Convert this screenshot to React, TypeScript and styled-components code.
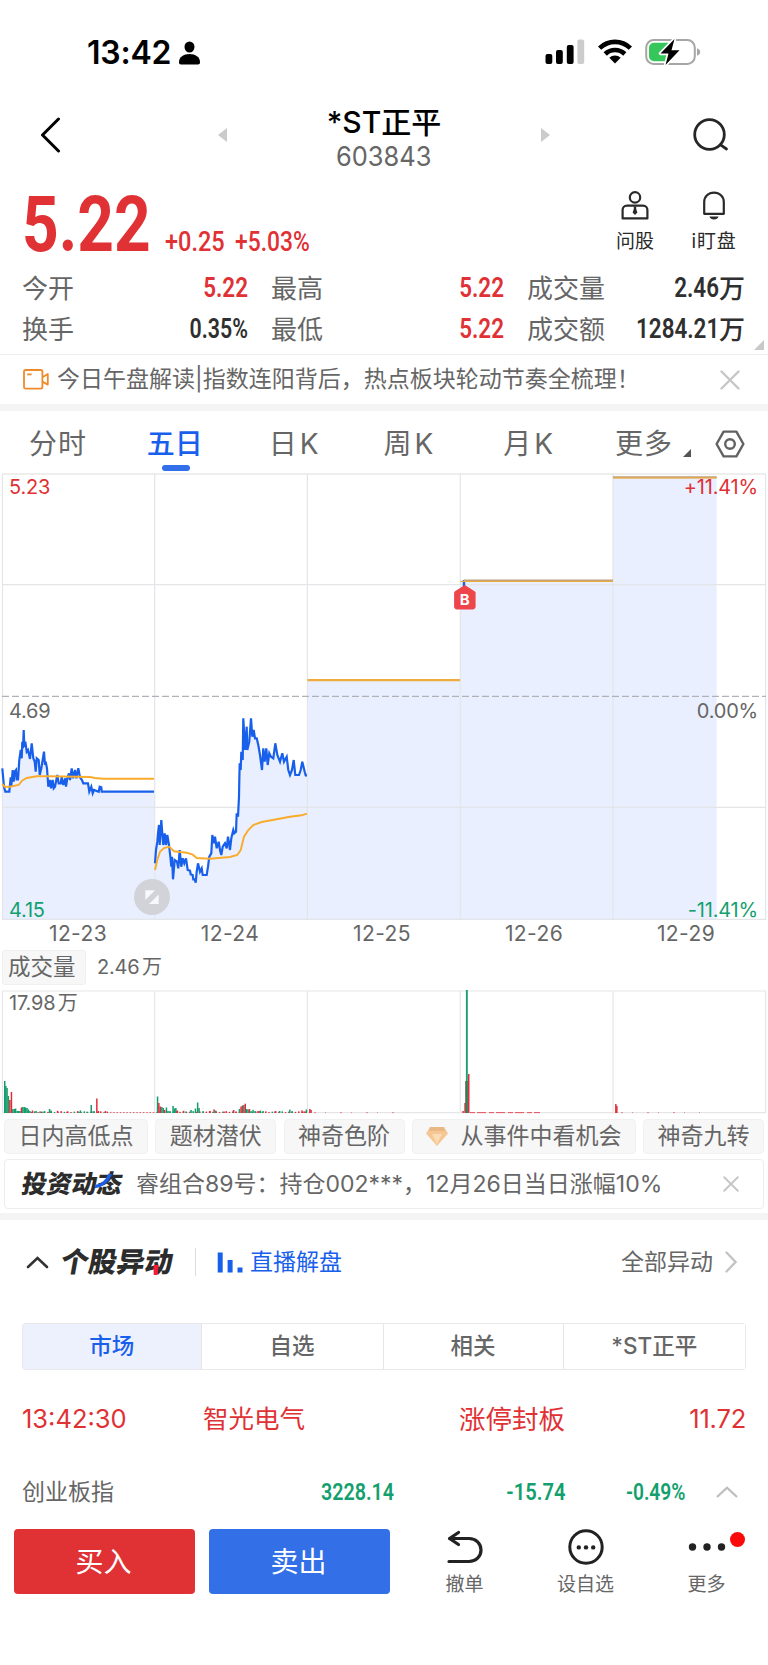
import React from 'react';
import styled, { createGlobalStyle, css } from 'styled-components';

const color = {
  red: '#e03135',
  green: '#14a06e',
  blue: '#1860ec',
  text: '#2f2f2f',
  grey: '#666666',
  line: '#ececec',
  fill: '#e9effe',
  orange: '#f9ab2c',
};

const GlobalStyle = createGlobalStyle`
  * { box-sizing: border-box; }
  body {
    margin: 0;
    background: #fff;
    font-family: Inter, "Noto Sans CJK SC", sans-serif;
    line-height: 1;
    color: ${color.grey};
  }
  svg { display: block; flex: none; }
`;

const Screen = styled.main`
  width: 768px;
  height: 1665px;
  background: #fff;
  overflow: hidden;
`;

type TextProps = {
  $size: number;
  $color?: string;
  $weight?: number;
  $space?: number;
  $word?: number;
  $stretch?: number;
  $from?: 'left' | 'right' | 'center';
};

const textStyle = css<TextProps>`
  display: inline-block;
  flex: none;
  white-space: nowrap;
  font-size: ${p => p.$size}px;
  font-weight: ${p => p.$weight ?? 400};
  color: ${p => p.$color ?? color.grey};
  letter-spacing: ${p => p.$space ?? 0}px;
  word-spacing: ${p => p.$word ?? 0}px;
  transform: scaleX(${p => p.$stretch ?? 1});
  transform-origin: ${p => p.$from ?? 'left'} center;
`;

const Label = styled.span<TextProps>`
  ${textStyle}
`;

const Figure = styled.span<TextProps>`
  ${textStyle}
  font-family: Roboto, "Noto Sans CJK SC", sans-serif;
`;

/* ---------- status bar ---------- */

const StatusBar = styled.header`
  display: flex;
  align-items: center;
  height: 92px;
  padding: 13px 67px 0 87px;
`;

const StatusIcons = styled.div`
  display: flex;
  align-items: center;
  gap: 13px;
  margin-left: auto;
  padding-bottom: 2px;
`;

const PersonIcon = styled.svg`
  margin-left: 7px;
`;

/* ---------- title ---------- */

const TitleBar = styled.div`
  display: flex;
  align-items: center;
  justify-content: space-between;
  height: 88px;
  padding: 0 38px 2px;
`;

const StockSwitch = styled.div`
  display: flex;
  align-items: center;
  justify-content: space-between;
  width: 332px;
  margin-left: 14px;
`;

const StockName = styled.div`
  display: flex;
  flex-direction: column;
  align-items: center;
  gap: 6px;
  padding-top: 6px;
`;

/* ---------- quote ---------- */

const QuoteHead = styled.section`
  display: flex;
  height: 89px;
  padding: 0 14px 0 22px;
`;

const Price = styled.div`
  width: 143px;
  padding-top: 6px;
`;

const Changes = styled.div`
  display: flex;
  align-items: flex-start;
  padding-top: 49px;
`;

const ChangeAmount = styled.div`
  width: 70px;
`;

const QuickActions = styled.div`
  display: flex;
  margin-left: auto;
`;

const QuickAction = styled.div<{ $width: number }>`
  display: flex;
  flex-direction: column;
  align-items: center;
  gap: 12px;
  width: ${p => p.$width}px;
  padding-top: 11px;
`;

const Stats = styled.section`
  position: relative;
  display: grid;
  grid-template-columns: 226px 233px 218px;
  grid-auto-rows: 41px;
  column-gap: 23px;
  height: 85px;
  padding: 0 23px 0 22px;
`;

const Stat = styled.div`
  display: flex;
  align-items: center;
  justify-content: space-between;
  padding-bottom: 2px;
`;

const ExpandCorner = styled.i<{ $size: number; $color: string }>`
  flex: none;
  width: ${p => p.$size}px;
  height: ${p => p.$size}px;
  background: ${p => p.$color};
  clip-path: polygon(100% 0, 100% 100%, 0 100%);
`;

const StatsCorner = styled(ExpandCorner)`
  position: absolute;
  right: 4px;
  bottom: 4px;
`;

const Notice = styled.section`
  display: flex;
  align-items: center;
  height: 50px;
  padding: 0 28px 0 23px;
  border-top: 1px solid ${color.line};
`;

const NoticeText = styled.div`
  flex: 1;
  padding-left: 8px;
`;

const Band = styled.div`
  height: 7px;
  background: #f4f4f4;
`;

/* ---------- period tabs ---------- */

const Periods = styled.nav`
  display: flex;
  align-items: center;
  height: 62px;
  padding: 3px 23px 0 29px;
`;

const Period = styled.div<{ $width: number }>`
  display: flex;
  flex-direction: column;
  align-items: flex-start;
  width: ${p => p.$width}px;
`;

const ActivePeriod = styled(Period)`
  padding-top: 14px;
  &::after {
    content: '';
    width: 28px;
    height: 6px;
    margin: 7px 0 0 15px;
    border-radius: 3px;
    background: #326fe8;
  }
`;

const MoreCorner = styled(ExpandCorner)`
  align-self: flex-end;
  margin: 0 24px 16px 0;
`;

/* ---------- charts ---------- */

const ChartArea = styled.section`
  position: relative;
  height: 448px;
`;

const ChartLabel = styled.span<{ $top: number; $side: 'left' | 'right'; $color: string }>`
  position: absolute;
  top: ${p => p.$top}px;
  ${p => p.$side}: ${p => (p.$side === 'left' ? 9 : 10)}px;
  font-size: 20px;
  letter-spacing: -0.2px;
  word-spacing: -3px;
  color: ${p => p.$color};
`;

const Dates = styled.div`
  display: grid;
  grid-template-columns: repeat(5, 152px);
  align-items: center;
  justify-items: center;
  height: 28px;
  padding: 0 0 4px 2px;
`;

const VolumeHead = styled.div`
  display: flex;
  align-items: center;
  gap: 11px;
  height: 41px;
  padding: 0 0 5px 2px;
`;

const VolumeButton = styled.div`
  display: flex;
  align-items: center;
  width: 84px;
  height: 35px;
  padding-left: 5px;
  border: 1px solid #f0f0f0;
  border-radius: 3px;
  background: #f7f7f7;
`;

const VolumeArea = styled.section`
  position: relative;
  height: 124px;
`;

/* ---------- tags and feed ---------- */

const Tags = styled.div`
  display: flex;
  gap: 7.25px;
  height: 45px;
  padding: 5px 4px;
`;

const Tag = styled.div<{ $width: number }>`
  display: flex;
  align-items: center;
  justify-content: center;
  gap: 12.5px;
  width: ${p => p.$width}px;
  border: 1px solid #f1f1f1;
  border-radius: 4px;
  background: #f7f7f7;
`;

const Feed = styled.div`
  display: flex;
  align-items: center;
  height: 50px;
  margin: 0 4px 4px;
  padding: 0 24px 0 17px;
  border: 1.5px solid #ededed;
  border-radius: 4px;
`;

const FeedText = styled.div`
  flex: 1;
  padding-left: 14px;
`;

const Slogan = styled.div<{ $size: number; $width: number; $indent?: number }>`
  position: relative;
  width: ${p => p.$width}px;
  margin-left: ${p => p.$indent ?? 0}px;
  font-size: ${p => p.$size}px;
  font-weight: 900;
  white-space: nowrap;
  color: #2c2c2c;
  transform: skewX(-10deg);
`;

const Accent = styled.svg<{ $left: number; $top: number }>`
  position: absolute;
  left: ${p => p.$left}px;
  top: ${p => p.$top}px;
`;

/* ---------- movers ---------- */

const MoversHead = styled.div`
  display: flex;
  align-items: center;
  height: 82px;
  padding: 2px 31px 0 26px;
`;

const HeadDivider = styled.i`
  width: 1px;
  height: 28px;
  margin: 0 21px 0 23px;
  background: #dcdcdc;
`;

const LiveBars = styled.svg`
  margin-right: 7px;
`;

const AllMovers = styled.div`
  display: flex;
  align-items: center;
  gap: 12px;
  margin-left: auto;
`;

const Segments = styled.div`
  display: grid;
  grid-template-columns: 177.5px 182px 180px 1fr;
  height: 47px;
  margin: 21px 22px 0;
  border: 1px solid #e9e9e9;
  border-radius: 3px;
`;

const Segment = styled.div<{ $active?: boolean }>`
  display: flex;
  align-items: center;
  justify-content: center;
  background: ${p => (p.$active ? '#ecf1fd' : '#fff')};
  & + & { border-left: 1.5px solid #e6e6e6; }
`;

const MoverRow = styled.div`
  display: grid;
  grid-template-columns: 181px 256px 1fr auto;
  align-items: center;
  height: 98px;
  padding: 0 22px;
`;

const IndexRow = styled.div`
  display: grid;
  grid-template-columns: 200px 172px 171px 120px 53px;
  align-items: center;
  height: 49px;
  padding: 0 0 1px 22px;
  > :not(:first-child) { justify-self: end; }
`;

/* ---------- bottom bar ---------- */

const BottomBar = styled.footer`
  display: flex;
  height: 112px;
  padding: 12px 0 0 14px;
`;

const TradeButton = styled.div<{ $bg: string }>`
  display: flex;
  align-items: center;
  justify-content: center;
  width: 181px;
  height: 65px;
  margin-right: 14px;
  padding-right: 2px;
  border-radius: 4px;
  background: ${p => p.$bg};
`;

const Tool = styled.div`
  position: relative;
  display: flex;
  flex-direction: column;
  align-items: center;
  gap: 10px;
  width: 121px;
`;

const Dot = styled.i`
  position: absolute;
  left: 84px;
  top: 3px;
  width: 15px;
  height: 15px;
  border-radius: 50%;
  background: #fa0a0a;
`;

/* ---------- price series: thirds of a pixel, left edge at 0 ---------- */

type Point = [number, number];

const day1: Point[] = [
  [7, 235], [12, 290], [16, 305], [28, 305], [32, 262], [34, 288], [38, 240], [41, 275], [44, 245], [48, 240], [50, 268], [54, 268],
  [58, 210], [62, 180], [65, 205], [67, 155], [69, 175], [71, 120], [73, 170], [76, 155], [80, 185], [84, 180], [90, 207], [95, 160], [100, 205],
  [104, 215], [107, 245], [110, 205], [116, 210], [119, 255], [124, 235], [132, 185], [135, 225], [137, 215], [141, 235], [145, 290], [150, 270], [153, 295],
  [158, 270], [161, 295], [165, 290], [172, 255], [176, 280], [182, 280], [185, 260], [190, 285], [196, 265], [198, 290], [202, 265],
  [207, 250], [210, 270], [215, 235], [219, 265], [225, 240], [229, 265], [235, 235], [240, 262], [246, 270], [250, 280], [264, 280],
  [268, 305], [274, 290], [278, 310], [282, 300], [296, 305], [299, 290], [304, 292], [305, 305], [462, 305],
];
const day1Avg: Point[] = [
  [7, 282], [14, 290], [30, 290], [56, 285], [66, 272], [80, 264], [110, 259], [150, 259], [270, 261], [285, 264], [310, 266], [462, 266],
];
const day2: Point[] = [
  [465, 520], [468, 480], [472, 455], [474, 430], [477, 405], [479, 465], [484, 390], [487, 430], [490, 465], [494, 430], [498, 465],
  [502, 435], [507, 465], [512, 510], [514, 530], [516, 500], [519, 568], [524, 510], [531, 515], [535, 535], [539, 480], [544, 530], [548, 505], [553, 520],
  [558, 505], [563, 540], [570, 542], [572, 553], [578, 555], [580, 568], [584, 568], [587, 578], [590, 545], [594, 520], [600, 545], [605, 535], [608, 555],
  [620, 555], [624, 530], [628, 500], [634, 490], [637, 435], [642, 460], [645, 440], [650, 475], [656, 455], [660, 480], [664, 495],
  [668, 470], [675, 460], [680, 475], [684, 440], [690, 480], [694, 445], [700, 420], [703, 430], [708, 425], [710, 370], [714, 380],
  [717, 320], [718, 270], [719, 220], [722, 240], [724, 185], [728, 210], [730, 85], [735, 180], [740, 110], [742, 180], [748, 155],
  [753, 85], [757, 140], [761, 120], [765, 145], [770, 145], [775, 165], [780, 195], [786, 240], [790, 175], [794, 215], [799, 175], [803, 225],
  [808, 190], [813, 200], [820, 205], [826, 160], [832, 195], [840, 215], [847, 190], [852, 215], [860, 200], [865, 240], [870, 255],
  [876, 240], [881, 210], [886, 255], [897, 255], [902, 240], [907, 215], [914, 245], [917, 256], [921, 256],
];
const day2Avg: Point[] = [
  [465, 540], [472, 510], [480, 485], [492, 474], [508, 470], [522, 484], [560, 488], [578, 494], [590, 504], [630, 506], [690, 501],
  [712, 495], [722, 480], [732, 440], [745, 420], [760, 405], [785, 396], [830, 388], [870, 380], [905, 376], [921, 371],
];

const toPath = (points: Point[]) =>
  points.map(([x, y], i) => `${i ? 'L' : 'M'}${(x / 3).toFixed(1)} ${(y / 3 + 217).toFixed(1)}`).join('');

const toArea = (points: Point[]) =>
  `${toPath(points)}L${points[points.length - 1][0] / 3} 446L${points[0][0] / 3} 446Z`;

const columns = [154.7, 307.4, 460.3, 613];

const PriceChart = () => (
  <svg width="768" height="448" viewBox="0 0 768 448">
    <g fill={color.fill}>
      <path d={toArea(day1)} />
      <path d={toArea(day2)} />
      <path d="M307.4 207H460.3V446H307.4ZM460.3 108H613V446H460.3ZM613 5H716.7V446H613Z" />
    </g>
    <g stroke="#e4e5e8" strokeWidth="1.2" fill="none">
      <path d="M2 1H766" strokeWidth="2" stroke="#eeeeee" />
      <path d="M2.5 1V446.3M765.6 1V446.3M2 111.7H766M2 334.3H766M2 446.3H766" />
      {columns.map(x => (
        <path key={x} d={`M${x} 1V446.3`} />
      ))}
    </g>
    <path d="M2 223.3H766" stroke="#b0b2b8" strokeWidth="1.2" strokeDasharray="7 3" />
    <g fill="none" strokeWidth="1.9" strokeLinejoin="miter">
      <path d={toPath(day1)} stroke={color.blue} strokeWidth="2.2" />
      <path d={toPath(day2)} stroke={color.blue} strokeWidth="2.2" />
      <path d={toPath(day1Avg)} stroke={color.orange} />
      <path d={toPath(day2Avg)} stroke={color.orange} />
      <path d="M464 107V114" stroke={color.blue} strokeWidth="2.4" />
      <path d="M307.4 207.2H460" stroke="#efab3e" strokeWidth="2.2" />
      <path d="M464 107.4H613M613 4.2H716.7" stroke="#b8a184" strokeWidth="2" />
      <path d="M460.3 108.4H613M613 4.9H716.7" stroke="#efab3e" strokeWidth="1.3" />
    </g>
    <path
      d="M464.8 112L474.6 118.3C475.3 118.8 475.6 119.4 475.6 120.2V133.5C475.6 135.2 474.4 136.4 472.7 136.4H457C455.3 136.4 454.1 135.2 454.1 133.5V120.2C454.1 119.4 454.4 118.8 455 118.3Z"
      fill="#ee454b"
    />
    <text x="464.8" y="132.3" textAnchor="middle" fontSize="15" fontWeight="700" fill="#fff">
      B
    </text>
    <circle cx="152" cy="424" r="18" fill="#d1d3d8" />
    <path d="M145.3 417.3H155L145.3 427ZM158.7 421.4V431H149Z" fill="#f6f8fd" />
  </svg>
);

/* volume bars: x, height, r(ed) or g(reen) */
type Bar = [number, number, 'r' | 'g'];

const bars: Bar[] = [
  [4.7, 32, 'g'], [5.8, 27, 'g'], [7, 25, 'g'], [8.3, 17, 'g'], [9.8, 13, 'r'], [11.4, 21, 'r'], [12.8, 4, 'g'], [14.3, 4, 'g'],
  [15.6, 4.5, 'g'], [17.2, 2, 'g'], [18.6, 2, 'g'], [20, 2, 'g'], [21.4, 5.5, 'r'], [22.8, 6, 'g'], [24.2, 6, 'g'], [25.6, 5.5, 'g'],
  [27, 5, 'g'], [28.4, 3.5, 'g'], [29.8, 2, 'g'], [32.5, 2.5, 'r'], [36, 2, 'g'], [40, 1.6, 'g'], [43, 1.4, 'g'], [49.5, 4, 'g'],
  [51, 2.4, 'g'], [57.5, 2.2, 'r'], [67, 1.3, 'r'], [79, 1.2, 'g'], [80.4, 2.6, 'g'], [87, 1.4, 'g'], [91.2, 8, 'g'], [93, 1.6, 'g'],
  [96.8, 14.5, 'r'], [98.4, 2, 'r'], [105.4, 2, 'r'],
  [157.5, 16.5, 'g'], [158.8, 10, 'r'], [160.2, 6.5, 'r'], [161.8, 6, 'g'], [163.2, 5, 'g'], [164.6, 3, 'r'], [166.4, 5.5, 'g'],
  [168, 2, 'g'], [170, 2, 'g'], [173, 7, 'g'], [174.4, 4.5, 'g'], [175.8, 5, 'g'], [177.4, 2.5, 'r'], [183.6, 2.2, 'r'], [186, 1.6, 'g'],
  [191, 3, 'g'], [195.4, 4.5, 'g'], [197.6, 10.5, 'g'], [199, 5, 'g'], [203, 2, 'g'], [210, 2, 'r'], [214, 3.6, 'r'], [215.6, 2.4, 'g'],
  [224, 1.4, 'r'], [233.6, 3, 'r'], [236, 1.6, 'r'], [239.4, 4, 'g'], [241, 6.5, 'r'], [242.4, 7.5, 'r'], [243.8, 8, 'g'], [245.2, 9.3, 'r'],
  [246.6, 4, 'g'], [248, 3.5, 'g'], [249.4, 4, 'r'], [251, 2, 'g'], [253, 3.2, 'g'], [255, 2, 'g'], [258, 2, 'r'], [260.4, 2.5, 'g'],
  [263, 2, 'g'], [275, 1.6, 'r'], [279.6, 2, 'g'], [289.8, 3.4, 'g'], [292, 1.2, 'g'], [302, 2.6, 'r'], [304, 1.6, 'r'], [306.4, 3.5, 'g'],
  [309.8, 4, 'r'], [311, 3, 'r'],
  [463, 2, 'r'], [465, 10, 'r'], [468.7, 39, 'r'],
  [615.8, 9, 'r'], [616.8, 7, 'r'],
];

const ripples: Bar[] = Array.from({ length: 92 }, (_, i): Bar => {
  const x = 5 + i * 3.3;
  const busy = x < 110 || x > 157;
  return [x, busy ? 0.9 + ((i * 7) % 5) * 0.25 : 0.7, (i * 5) % 3 === 0 && busy ? 'g' : 'r'];
});

const VolumeChart = () => (
  <svg width="768" height="124" viewBox="0 0 768 124">
    <g stroke="#e6e6e8" strokeWidth="1.2" fill="none">
      <path d="M2 1H766M2.5 1V123M765.6 1V123M2 122.6H766" />
      {columns.map(x => (
        <path key={x} d={`M${x} 1V123`} />
      ))}
    </g>
    {[...ripples, ...bars].map(([x, h, tone], i) => (
      <rect key={i} x={x - 0.7} y={123 - h} width="1.5" height={h} fill={tone === 'r' ? '#e02d3c' : '#149c6c'} />
    ))}
    <path d="M470 122.6H540" stroke="#e02d3c" strokeWidth="0.8" strokeDasharray="5 2 9 3" />
    <path d="M621 122.6H700M314 122.6H400" stroke="#e02d3c" strokeWidth="0.5" strokeDasharray="2 9 1 14" />
    <rect x="465.2" y="91" width="1.4" height="32" fill="#80604f" />
    <rect x="465.9" y="0" width="1.9" height="123" fill="#1c9f72" />
    <rect x="465.9" y="91" width="1.9" height="32" fill="#3c7a54" />
  </svg>
);

/* ---------- small drawings ---------- */

const Cross = ({ size, stroke }: { size: number; stroke: string }) => (
  <svg width={size} height={size} viewBox="0 0 20 20" fill="none" stroke={stroke} strokeWidth="2.4" strokeLinecap="round">
    <path d="M1.5 1.5L18.5 18.5M18.5 1.5L1.5 18.5" />
  </svg>
);

const SignalIcon = () => (
  <svg width="40" height="26" viewBox="0 0 40 26">
    <rect x="0.5" y="15" width="6.8" height="10" rx="2" />
    <rect x="11" y="11" width="6.8" height="14" rx="2" />
    <rect x="21.8" y="6" width="6.8" height="19" rx="2" />
    <rect x="32.4" y="0.5" width="6.8" height="24.5" rx="2" fill="#cccccc" />
  </svg>
);

const WifiIcon = () => (
  <svg width="34" height="25" viewBox="0 0 34 25">
    <g fill="none" stroke="#000" strokeWidth="4.6">
      <path d="M1.6 9.2A22 22 0 0 1 32.4 9.2" />
      <path d="M7.2 15A14 14 0 0 1 26.8 15" />
    </g>
    <path d="M11.3 18.7A8.4 8.4 0 0 1 22.7 18.7L17 24.6Z" />
  </svg>
);

const BatteryIcon = () => (
  <svg width="56" height="28" viewBox="0 0 56 28">
    <rect x="1.2" y="2" width="48.6" height="24" rx="7.5" fill="none" stroke="#a6a6a6" strokeWidth="2" />
    <path d="M52 10.3C54 11 55.2 12.4 55.2 14S54 17 52 17.7Z" fill="#a6a6a6" />
    <path d="M9 4.8H24V23.2H9A5 5 0 0 1 4 18.2V9.8A5 5 0 0 1 9 4.8Z" fill="#35c759" />
    <path d="M29.5 1L15.5 15.5H23.5L20.5 27L34.5 12.2H26.5Z" fill="#000" stroke="#fff" strokeWidth="3.4" strokeLinejoin="round" paintOrder="stroke" />
  </svg>
);

const Arrow = ({ d }: { d: string }) => (
  <svg width="9" height="14" viewBox="0 0 9 14" fill="#cbcbcb">
    <path d={d} />
  </svg>
);

const stats = [
  { name: '今开', value: '5.22', tone: color.red },
  { name: '最高', value: '5.22', tone: color.red },
  { name: '成交量', value: '2.46', unit: '万', tone: color.text },
  { name: '换手', value: '0.35%', tone: color.text },
  { name: '最低', value: '5.22', tone: color.red },
  { name: '成交额', value: '1284.21', unit: '万', tone: color.text },
];

const StatValue = styled.div`
  display: flex;
  align-items: center;
`;

const App = () => (
  <>
    <GlobalStyle />
    <Screen>
      <StatusBar>
        <Label $size={32} $weight={600} $color="#000" $space={-0.2}>13:42</Label>
        <PersonIcon width="23" height="24" viewBox="0 0 23 24">
          <ellipse cx="11.5" cy="6" rx="5" ry="5.6" />
          <path d="M1 21.2C1 16 5.6 13 11.5 13S22 16 22 21.2C22 22.8 21.2 23.4 20 23.4H3C1.8 23.4 1 22.8 1 21.2Z" />
        </PersonIcon>
        <StatusIcons>
          <SignalIcon />
          <WifiIcon />
          <BatteryIcon />
        </StatusIcons>
      </StatusBar>

      <TitleBar>
        <svg width="24" height="36" viewBox="0 0 24 36" fill="none" stroke="#000" strokeWidth="3" strokeLinecap="round" strokeLinejoin="round">
          <path d="M20.5 2L4.5 18L20.5 34" />
        </svg>
        <StockSwitch>
          <Arrow d="M9 0V14L0 7Z" />
          <StockName>
            <Label $size={30} $weight={500} $color="#000">*ST正平</Label>
            <Label $size={26.5} $stretch={0.96} $from="center">603843</Label>
          </StockName>
          <Arrow d="M0 0V14L9 7Z" />
        </StockSwitch>
        <svg width="38" height="36" viewBox="0 0 38 36" fill="none" stroke="#262626" strokeWidth="2.8" strokeLinecap="round">
          <circle cx="17.5" cy="17.5" r="14.8" />
          <path d="M29 28.2L34.5 32" />
        </svg>
      </TitleBar>

      <QuoteHead>
        <Price>
          <Figure $size={78} $weight={700} $color={color.red} $stretch={0.82}>5.22</Figure>
        </Price>
        <Changes>
          <ChangeAmount>
            <Figure $size={27} $weight={500} $color={color.red} $stretch={0.87}>+0.25</Figure>
          </ChangeAmount>
          <Figure $size={27} $weight={500} $color={color.red} $stretch={0.845}>+5.03%</Figure>
        </Changes>
        <QuickActions>
          <QuickAction $width={78}>
            <svg width="28" height="29" viewBox="0 0 28 29" fill="none" stroke="#2a2a2a" strokeWidth="2.2" strokeLinejoin="round">
              <circle cx="14" cy="6.4" r="5.2" />
              <path d="M6 14.6H22C24.8 14.6 26.4 16.6 26.4 19V27.4H1.6V19C1.6 16.6 3.2 14.6 6 14.6Z" />
              <path d="M12.8 15.5H15.2V18L16.4 21.4L14 24L11.6 21.4L12.8 18Z" fill="#2a2a2a" stroke="none" />
            </svg>
            <Label $size={19} $color="#2a2a2a">问股</Label>
          </QuickAction>
          <QuickAction $width={80}>
            <svg width="24" height="29" viewBox="0 0 24 29" fill="none" stroke="#2a2a2a" strokeWidth="2.2" strokeLinejoin="round">
              <path d="M2.2 22.8V11C2.2 5.6 6.4 1.6 12 1.6S21.8 5.6 21.8 11V22.8Z" />
              <path d="M7.4 25.6H16.6C16 27.6 14.2 28.6 12 28.6S8 27.6 7.4 25.6Z" fill="#2a2a2a" stroke="none" />
            </svg>
            <Label $size={19} $color="#2a2a2a" $space={0.8}>i盯盘</Label>
          </QuickAction>
        </QuickActions>
      </QuoteHead>

      <Stats>
        {stats.map(s => (
          <Stat key={s.name}>
            <Label $size={26}>{s.name}</Label>
            <StatValue>
              <Figure $size={27} $weight={600} $color={s.tone} $stretch={s.value.endsWith('%') ? 0.79 : 0.83} $from="right">{s.value}</Figure>
              {s.unit && <Label $size={26} $weight={500} $color={s.tone}>{s.unit}</Label>}
            </StatValue>
          </Stat>
        ))}
        <StatsCorner $size={10} $color="#c9c9c9" />
      </Stats>

      <Notice>
        <svg width="26" height="21" viewBox="0 0 26 21" fill="none" stroke="#ef8b2d" strokeWidth="1.8" strokeLinejoin="round">
          <rect x="1" y="1" width="18.4" height="18.6" rx="1.6" />
          <path d="M4.2 5.4H8.6" />
          <path d="M19.4 8.2L24.8 5V15.6L19.4 12.6" />
        </svg>
        <NoticeText>
          <Label $size={23}>今日午盘解读|指数连阳背后，热点板块轮动节奏全梳理！</Label>
        </NoticeText>
        <Cross size={20} stroke="#c6c6c6" />
      </Notice>
      <Band />

      <Periods>
        <Period $width={118}><Label $size={28} $space={1}>分时</Label></Period>
        <ActivePeriod $width={122}><Label $size={28} $weight={500} $color={color.blue}>五日</Label></ActivePeriod>
        <Period $width={115}><Label $size={28} $space={3}>日K</Label></Period>
        <Period $width={120}><Label $size={28} $space={3}>周K</Label></Period>
        <Period $width={112}><Label $size={28} $space={3}>月K</Label></Period>
        <Period $width={68}><Label $size={28} $space={1}>更多</Label></Period>
        <MoreCorner $size={8} $color="#555" />
        <svg width="30" height="28" viewBox="0 0 30 28" fill="none" stroke="#626262" strokeWidth="2.4" strokeLinejoin="round">
          <path d="M8.6 1.6H21.4L28.4 14L21.4 26.4H8.6L1.6 14Z" />
          <circle cx="15" cy="14" r="4.8" />
        </svg>
      </Periods>

      <ChartArea>
        <PriceChart />
        <ChartLabel $top={4} $side="left" $color={color.red}>5.23</ChartLabel>
        <ChartLabel $top={4} $side="right" $color={color.red}>+11.41%</ChartLabel>
        <ChartLabel $top={228} $side="left" $color={color.grey}>4.69</ChartLabel>
        <ChartLabel $top={228} $side="right" $color={color.grey}>0.00%</ChartLabel>
        <ChartLabel $top={427} $side="left" $color={color.green}>4.15</ChartLabel>
        <ChartLabel $top={427} $side="right" $color={color.green}>-11.41%</ChartLabel>
      </ChartArea>

      <Dates>
        {['12-23', '12-24', '12-25', '12-26', '12-29'].map(d => (
          <Label key={d} $size={21} $space={0.4}>{d}</Label>
        ))}
      </Dates>

      <VolumeHead>
        <VolumeButton><Label $size={22.5}>成交量</Label></VolumeButton>
        <Label $size={20} $word={-3} $space={-0.2}>2.46 万</Label>
      </VolumeHead>
      <VolumeArea>
        <VolumeChart />
        <ChartLabel $top={3} $side="left" $color={color.grey}>17.98 万</ChartLabel>
      </VolumeArea>

      <Tags>
        <Tag $width={144}><Label $size={23}>日内高低点</Label></Tag>
        <Tag $width={121}><Label $size={23}>题材潜伏</Label></Tag>
        <Tag $width={121}><Label $size={23}>神奇色阶</Label></Tag>
        <Tag $width={224}>
          <svg width="22" height="19" viewBox="0 0 22 19">
            <path d="M4 0H18L22 6.5L11 19L0 6.5Z" fill="#f5c795" />
            <path d="M4 0H18L19 4H3Z" fill="#eab883" />
            <path d="M6 7H16L11 17Z" fill="#fbdcb5" />
          </svg>
          <Label $size={23}>从事件中看机会</Label>
        </Tag>
        <Tag $width={121}><Label $size={23}>神奇九转</Label></Tag>
      </Tags>

      <Feed>
        <Slogan $size={25} $width={100}>
          投资动态
          <Accent $left={73} $top={1} width="20" height="16" viewBox="0 0 20 16">
            <path d="M0.5 13.5C7 13 11.5 8 13.5 1" fill="none" stroke={color.blue} strokeWidth="3.6" />
          </Accent>
        </Slogan>
        <FeedText>
          <Label $size={23}>睿组合89号：持仓002***，12月26日当日涨幅10%</Label>
        </FeedText>
        <Cross size={16} stroke="#c6c6c6" />
      </Feed>
      <Band />

      <MoversHead>
        <svg width="23" height="13" viewBox="0 0 23 13" fill="none" stroke="#333" strokeWidth="2.6" strokeLinecap="round">
          <path d="M2 11L11.5 2L21 11" />
        </svg>
        <Slogan $size={28} $width={111} $indent={12}>
          个股异动
          <Accent $left={93} $top={17} width="6" height="10" viewBox="0 0 6 10">
            <path d="M0 0H5L6 10H2Z" fill="#f51b36" />
          </Accent>
        </Slogan>
        <HeadDivider />
        <LiveBars width="26" height="21" viewBox="0 0 26 21" fill={color.blue}>
          <path d="M0.7 0.5H5.7V20.5H0.7ZM10.6 8H15.6V20.5H10.6ZM20.5 15.5H25.5V20.5H20.5Z" />
        </LiveBars>
        <Label $size={23} $color={color.blue}>直播解盘</Label>
        <AllMovers>
          <Label $size={23}>全部异动</Label>
          <svg width="12" height="22" viewBox="0 0 12 22" fill="none" stroke="#c4c4c4" strokeWidth="2.4" strokeLinecap="round">
            <path d="M1.5 1.5L10.5 11L1.5 20.5" />
          </svg>
        </AllMovers>
      </MoversHead>

      <Segments>
        <Segment $active><Label $size={22.5} $weight={500} $color={color.blue}>市场</Label></Segment>
        <Segment><Label $size={22.5} $weight={500}>自选</Label></Segment>
        <Segment><Label $size={22.5} $weight={500}>相关</Label></Segment>
        <Segment><Label $size={22.5} $weight={500}>*ST正平</Label></Segment>
      </Segments>

      <MoverRow>
        <Label $size={25.5} $color={color.red}>13:42:30</Label>
        <Label $size={25.5} $color={color.red}>智光电气</Label>
        <Label $size={26.5} $color={color.red}>涨停封板</Label>
        <Label $size={25.5} $space={-0.2} $color={color.red}>11.72</Label>
      </MoverRow>

      <IndexRow>
        <Label $size={23}>创业板指</Label>
        <Figure $size={24} $weight={600} $color={color.green} $stretch={0.82} $from="right">3228.14</Figure>
        <Figure $size={24} $weight={600} $color={color.green} $stretch={0.84} $from="right">-15.74</Figure>
        <Figure $size={24} $weight={600} $color={color.green} $stretch={0.8} $from="right">-0.49%</Figure>
        <svg width="22" height="12" viewBox="0 0 22 12" fill="none" stroke="#bdbdbd" strokeWidth="2.2">
          <path d="M1 11L11 1.8L21 11" />
        </svg>
      </IndexRow>

      <BottomBar>
        <TradeButton $bg={color.red}><Label $size={28} $color="#fff">买入</Label></TradeButton>
        <TradeButton $bg="#336fe7"><Label $size={28} $color="#fff">卖出</Label></TradeButton>
        <Tool>
          <svg width="36" height="36" viewBox="0 0 36 36" fill="none" stroke="#222" strokeWidth="3.2" strokeLinecap="round" strokeLinejoin="round">
            <path d="M11.5 3.5L2.5 9.5L11.5 15.5" />
            <path d="M3 9.5H22C29 9.5 34 14.5 34 21S29 32.5 22 32.5H2" />
          </svg>
          <Label $size={19}>撤单</Label>
        </Tool>
        <Tool>
          <svg width="36" height="36" viewBox="0 0 36 36">
            <circle cx="18" cy="18" r="16.2" fill="none" stroke="#222" strokeWidth="3" />
            <g fill="#222">
              <circle cx="10.8" cy="18.4" r="2.2" />
              <circle cx="18" cy="18.4" r="2.2" />
              <circle cx="25.2" cy="18.4" r="2.2" />
            </g>
          </svg>
          <Label $size={19}>设自选</Label>
        </Tool>
        <Tool>
          <svg width="38" height="36" viewBox="0 0 38 36" fill="#222">
            <circle cx="4.5" cy="18" r="3.7" />
            <circle cx="19" cy="18" r="3.7" />
            <circle cx="33.5" cy="18" r="3.7" />
          </svg>
          <Dot />
          <Label $size={19}>更多</Label>
        </Tool>
      </BottomBar>
    </Screen>
  </>
);

export default App;
